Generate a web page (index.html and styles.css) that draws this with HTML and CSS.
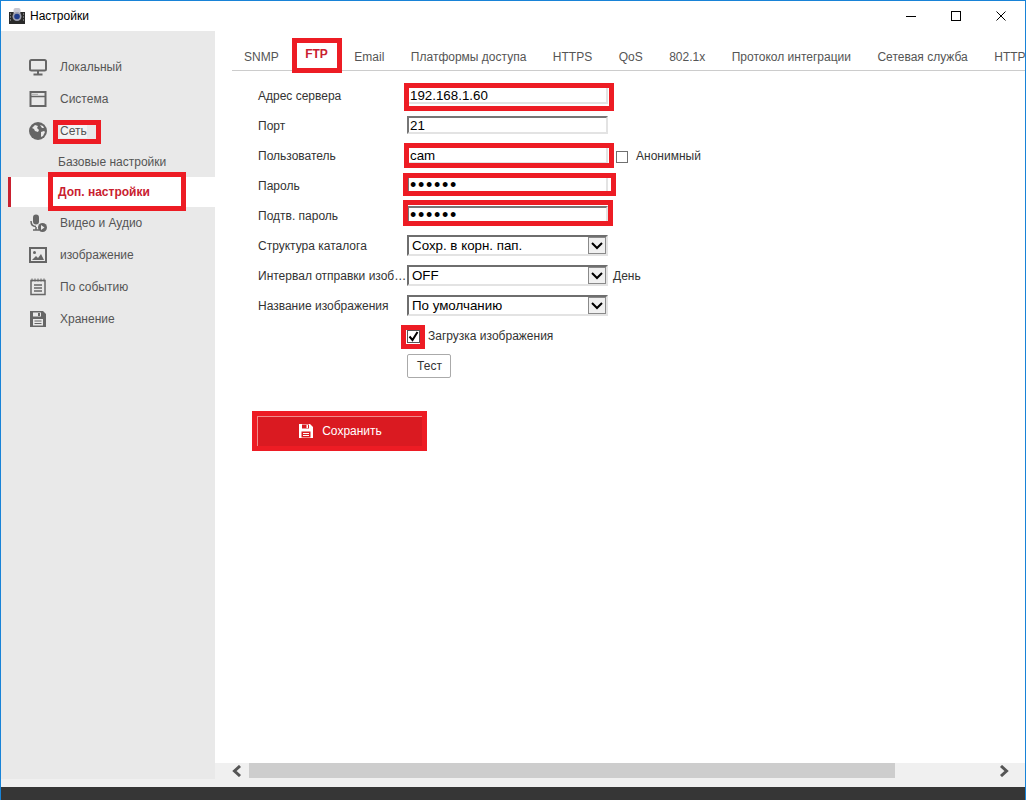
FILE: index.html
```html
<!DOCTYPE html>
<html lang="ru">
<head>
  <meta charset="UTF-8">
  <title>Настройки</title>
  <link rel="stylesheet" href="styles.css">
</head>
<body>
  <div class="window">
    <div class="titlebar">
      <svg class="app-icon" width="16" height="16" viewBox="0 0 16 16">
        <rect x="0" y="4" width="16" height="12" fill="#2a2a2a"/>
        <rect x="4.500" y="0" width="7" height="6" rx="2" fill="#c8c8d2"/>
        <circle cx="8" cy="8.500" r="4.500" fill="#9c9eae"/>
        <circle cx="8" cy="8.500" r="2.800" fill="#1f3c8c"/>
        <path d="M1 6h1M1 9h1M1 12h1M14 6h1M14 9h1M14 12h1" stroke="#bbb"/>
      </svg>
      <span class="app-title">Настройки</span>
      <div class="win-buttons">
        <svg width="12" height="12" viewBox="0 0 12 12"><path d="M1 6.500h10" stroke="#000" fill="none"/></svg>
        <svg width="12" height="12" viewBox="0 0 12 12"><rect x="1.500" y="1.500" width="9" height="9" stroke="#000" fill="none"/></svg>
        <svg width="12" height="12" viewBox="0 0 12 12"><path d="M1.500 1.500l9 9M10.500 1.500l-9 9" stroke="#000" fill="none"/></svg>
      </div>
    </div>

    <div class="main">
      <div class="sidebar">
        <div class="nav-item">
          <svg class="nav-icon" viewBox="0 0 18 18"><rect x="1" y="2" width="16" height="10.500" rx="1.500" fill="none" stroke="#666" stroke-width="2"/><path d="M9 13v3M4.500 16.500h9" stroke="#666" stroke-width="2" fill="none"/></svg>
          <span>Локальный</span>
        </div>
        <div class="nav-item">
          <svg class="nav-icon" viewBox="0 0 18 18"><rect x="1.500" y="2" width="15" height="14" fill="none" stroke="#666" stroke-width="2"/><path d="M2 6.500h14" stroke="#666" stroke-width="1.500"/><path d="M3.500 4.300h1M5.500 4.300h1M7.500 4.300h1" stroke="#666" stroke-width="1"/></svg>
          <span>Система</span>
        </div>
        <div class="nav-item">
          <svg class="nav-icon" viewBox="0 0 18 18"><circle cx="9" cy="9" r="9" fill="#666"/><path d="M3 6l3-3 3 1-1 2 2 2-1 2-3-1-1-2zM12 10l3-1 1 1-2 4-2 1zM11 3l3 1 1 2-2 0z" fill="#e9e9e9"/></svg>
          <span class="nav-net">Сеть</span>
        </div>
        <div class="sub-item">Базовые настройки</div>
        <div class="sub-item active">Доп. настройки</div>
        <div class="nav-item">
          <svg class="nav-icon" viewBox="0 0 18 18"><rect x="4" y="0.500" width="6" height="10" rx="3" fill="#666"/><path d="M2 7c0 4 2 5.500 5 5.500M7 13v2.500M4 16h6" stroke="#666" stroke-width="1.500" fill="none"/><circle cx="13.500" cy="13.500" r="4.500" fill="#666"/><path d="M12 11l3.500 2.500-3.500 2.500z" fill="#e9e9e9"/></svg>
          <span>Видео и Аудио</span>
        </div>
        <div class="nav-item">
          <svg class="nav-icon" viewBox="0 0 18 18"><rect x="1" y="2" width="16" height="14" fill="none" stroke="#666" stroke-width="2"/><circle cx="5.500" cy="6.500" r="1.500" fill="#666"/><path d="M3 14l4-4 2 2 3-4 3 6z" fill="#666"/></svg>
          <span>изображение</span>
        </div>
        <div class="nav-item">
          <svg class="nav-icon" viewBox="0 0 18 18"><rect x="2" y="2.500" width="14" height="14" fill="none" stroke="#666" stroke-width="1.500"/><path d="M3 0.500v3M6 0.500v3M9 0.500v3M12 0.500v3M15 0.500v3" stroke="#666"/><path d="M5 7h8M5 10h8M5 13h8" stroke="#666" stroke-width="1.500"/></svg>
          <span>По событию</span>
        </div>
        <div class="nav-item">
          <svg class="nav-icon" viewBox="0 0 18 18"><path d="M1 1h13l3 3v13H1z" fill="#666"/><rect x="4" y="2.500" width="8" height="4" fill="#e9e9e9"/><rect x="9" y="3" width="2" height="3" fill="#666"/><rect x="4" y="9" width="10" height="6.500" fill="#e9e9e9"/><path d="M5.500 11h7M5.500 13.500h7" stroke="#666"/></svg>
          <span>Хранение</span>
        </div>
      </div>

      <div class="content">
        <div class="page">
          <div class="tabs">
            <span class="tab">SNMP</span>
            <span class="tab tab-on">FTP</span>
            <span class="tab">Email</span>
            <span class="tab">Платформы доступа</span>
            <span class="tab">HTTPS</span>
            <span class="tab">QoS</span>
            <span class="tab">802.1x</span>
            <span class="tab">Протокол интеграции</span>
            <span class="tab">Сетевая служба</span>
            <span class="tab">HTTP</span>
          </div>

          <div class="form">
            <div class="row">
              <span class="label">Адрес сервера</span>
              <input class="field" type="text" value="192.168.1.60">
            </div>
            <div class="row">
              <span class="label">Порт</span>
              <input class="field" type="text" value="21">
            </div>
            <div class="row">
              <span class="label">Пользователь</span>
              <input class="field" type="text" value="cam">
              <span class="check-box anon-box"></span>
              <span class="after-text">Анонимный</span>
            </div>
            <div class="row">
              <span class="label">Пароль</span>
              <input class="field field-pass" type="password" value="123456">
            </div>
            <div class="row">
              <span class="label">Подтв. пароль</span>
              <input class="field field-pass" type="password" value="123456">
            </div>
            <div class="row">
              <span class="label">Структура каталога</span>
              <div class="select"><span>Сохр. в корн. пап.</span><span class="arrow"><svg width="12" height="8" viewBox="0 0 12 8"><path d="M1 1l5 5 5-5" fill="none" stroke="#000" stroke-width="2"/></svg></span></div>
            </div>
            <div class="row">
              <span class="label">Интервал отправки изоб…</span>
              <div class="select"><span>OFF</span><span class="arrow"><svg width="12" height="8" viewBox="0 0 12 8"><path d="M1 1l5 5 5-5" fill="none" stroke="#000" stroke-width="2"/></svg></span></div>
              <span class="day">День</span>
            </div>
            <div class="row">
              <span class="label">Название изображения</span>
              <div class="select"><span>По умолчанию</span><span class="arrow"><svg width="12" height="8" viewBox="0 0 12 8"><path d="M1 1l5 5 5-5" fill="none" stroke="#000" stroke-width="2"/></svg></span></div>
            </div>
            <div class="row">
              <span class="label"></span>
              <span class="check-box"><svg width="11" height="11" viewBox="0 0 11 11"><path d="M1.500 5.500l3 3.500 5-8" fill="none" stroke="#000" stroke-width="2"/></svg></span>
              <span class="upload-text">Загрузка изображения</span>
            </div>
            <div class="row">
              <span class="label"></span>
              <button class="test-btn">Тест</button>
            </div>
          </div>

          <button class="save-btn">
            <svg width="16" height="16" viewBox="0 0 16 16"><path d="M1 1h11l3 3v11H1z" fill="#fff"/><rect x="4" y="1.500" width="7" height="4" fill="#da1a21"/><rect x="8.500" y="2" width="1.500" height="3" fill="#fff"/><rect x="3.500" y="8.500" width="9" height="6" fill="#da1a21"/><path d="M5 10.500h6M5 12.500h6" stroke="#fff"/></svg>
            <span>Сохранить</span>
          </button>
        </div>

        <div class="hscroll">
          <svg class="scroll-arrow" width="12" height="12" viewBox="0 0 12 12"><path d="M9 1L3.500 6 9 11" fill="none" stroke="#555" stroke-width="3"/></svg>
          <div class="scroll-track"><div class="scroll-thumb"></div></div>
          <svg class="scroll-arrow" width="12" height="12" viewBox="0 0 12 12"><path d="M3 1l5.500 5L3 11" fill="none" stroke="#555" stroke-width="3"/></svg>
        </div>
      </div>
    </div>

    <div class="bottom-strip"></div>
    <div class="statusbar"></div>

    <!-- red marks drawn over the screenshot -->
    <div class="mark mark-net"></div>
    <div class="mark mark-adv"></div>
    <div class="mark mark-ftp"></div>
    <div class="mark mark-addr"></div>
    <div class="mark mark-user"></div>
    <div class="mark mark-pass"></div>
    <div class="mark mark-confirm"></div>
    <div class="mark mark-check"></div>
    <div class="mark mark-save"></div>
  </div>
</body>
</html>
```

FILE: styles.css
```css
* {
  box-sizing: border-box;
}
body {
  margin: 0;
  background-color: #fff;
  font-family: "Liberation Sans", Arial, sans-serif;
  font-size: 12px;
  color: #333;
}
.window {
  position: relative;
  width: 1026px;
  height: 800px;
  display: flex;
  flex-direction: column;
  overflow: hidden;
  border-top: 1px solid #1883d7;
  border-left: 1px solid #1883d7;
  border-right: 1px solid #1883d7;
}
.titlebar {
  height: 30px;
  flex: none;
  display: flex;
  align-items: center;
  padding-left: 8px;
  background-color: #fff;
}
.app-title {
  margin-left: 5px;
  color: #000;
}
.win-buttons {
  margin-left: auto;
  margin-right: 18px;
  display: flex;
  gap: 33px;
}
.main {
  height: 748px;
  flex: none;
  display: flex;
}
.sidebar {
  width: 214px;
  flex: none;
  padding-top: 20px;
  background-color: #e9e9e9;
  color: #555;
}
.nav-item {
  height: 32px;
  display: flex;
  align-items: center;
  padding-left: 28px;
}
.nav-icon {
  width: 18px;
  height: 18px;
  margin-right: 13px;
  flex: none;
}
.nav-net {
  background-color: #f4f4f4;
}
.sub-item {
  height: 30px;
  line-height: 30px;
  margin-left: 7px;
  padding-left: 50px;
}
.sub-item.active {
  background-color: #fff;
  border-left: 3px solid #c9202f;
  padding-left: 47px;
  color: #c9202f;
  font-weight: bold;
}
.content {
  flex: 1;
  min-width: 0;
  display: flex;
  flex-direction: column;
}
.page {
  flex: 1;
  min-height: 0;
  overflow: hidden;
  background-color: #fff;
}
.tabs {
  height: 40px;
  margin-left: 17px;
  padding-left: 12px;
  padding-top: 12px;
  display: flex;
  align-items: center;
  gap: 26.5px;
  white-space: nowrap;
  border-bottom: 1px solid #ccc;
  color: #555;
  overflow: hidden;
}
.tab {
  flex: none;
}
.tab-on {
  color: #c9202f;
  font-weight: bold;
  margin-top: -5px;
}
.form {
  margin-top: 10px;
  margin-left: 43px;
}
.row {
  height: 30px;
  display: flex;
  align-items: center;
}
.label {
  width: 149px;
  flex: none;
  white-space: nowrap;
}
.field {
  width: 201px;
  height: 18px;
  margin: 0 0 2px;
  padding: 0 1px;
  border-style: solid;
  border-width: 2px;
  border-color: #767676 #e3e3e3 #e3e3e3 #767676;
  background-color: #fff;
  font-family: "Liberation Sans", Arial, sans-serif;
  font-size: 13.33px;
  color: #000;
  outline: none;
}
.field-pass {
  font-size: 18px;
  letter-spacing: 1.7px;
}
.select {
  width: 201px;
  height: 21px;
  padding-left: 3px;
  margin-bottom: 1px;
  display: flex;
  align-items: center;
  justify-content: space-between;
  border-style: solid;
  border-width: 2px;
  border-color: #6e6e6e #e3e3e3 #e3e3e3 #6e6e6e;
  background-color: #fff;
  font-size: 13.33px;
  color: #000;
}
.arrow {
  width: 18px;
  height: 17px;
  display: flex;
  align-items: center;
  justify-content: center;
  border: 1px solid #8a8a8a;
  background-color: #f0f0f0;
}
.day {
  margin-left: 5px;
}
.check-box {
  width: 13px;
  height: 13px;
  flex: none;
  display: flex;
  align-items: center;
  justify-content: center;
  border: 1px solid #555;
  background-color: #fff;
}
.anon-box {
  width: 12px;
  height: 12px;
  margin-left: 8px;
  margin-top: 1px;
  border-color: #707070;
}
.after-text {
  margin-left: 8px;
}
.upload-text {
  margin-left: 8px;
}
.test-btn {
  width: 44px;
  height: 24px;
  padding: 0 0 0 1px;
  border: 1px solid #aaa;
  border-radius: 2px;
  background-color: #fff;
  font-family: "Liberation Sans", Arial, sans-serif;
  font-size: 12px;
  color: #333;
}
.save-btn {
  width: 165px;
  height: 30px;
  margin-top: 35px;
  margin-left: 42px;
  padding: 0 0 2px;
  display: flex;
  align-items: center;
  justify-content: center;
  gap: 8px;
  border: none;
  border-top: 1px solid #f08c8c;
  border-left: 1px solid #f08c8c;
  background-color: #da1a21;
  font-family: "Liberation Sans", Arial, sans-serif;
  font-size: 12px;
  color: #fff;
}
.hscroll {
  height: 16px;
  flex: none;
  display: flex;
  align-items: center;
  background-color: #f0f0f0;
}
.scroll-arrow {
  flex: none;
  margin: 0 15px 0 6px;
}
.scroll-arrow:first-child {
  margin: 0 6px 0 16px;
}
.scroll-track {
  flex: 1;
  height: 16px;
}
.scroll-thumb {
  width: 646px;
  height: 15px;
  background-color: #cdcdcd;
}
.bottom-strip {
  height: 8px;
  flex: none;
  background-color: #f0f0f0;
}
.statusbar {
  flex: 1;
  margin: 0 -1px;
  background-color: #363636;
}
.mark {
  position: absolute;
  border: 5px solid #ed1c24;
  pointer-events: none;
}
.mark-net { left: 52px; top: 119px; width: 48px; height: 24px; }
.mark-adv { left: 47px; top: 171px; width: 138px; height: 39px; }
.mark-ftp { left: 291px; top: 37px; width: 50px; height: 35px; }
.mark-addr { left: 403px; top: 82px; width: 210px; height: 28px; }
.mark-user { left: 403px; top: 142px; width: 210px; height: 25px; }
.mark-pass { left: 402px; top: 172px; width: 213px; height: 23px; }
.mark-confirm { left: 402px; top: 199px; width: 210px; height: 26px; }
.mark-check { left: 400px; top: 324px; width: 24px; height: 24px; }
.mark-save { left: 251px; top: 410px; width: 175px; height: 40px; }
```
